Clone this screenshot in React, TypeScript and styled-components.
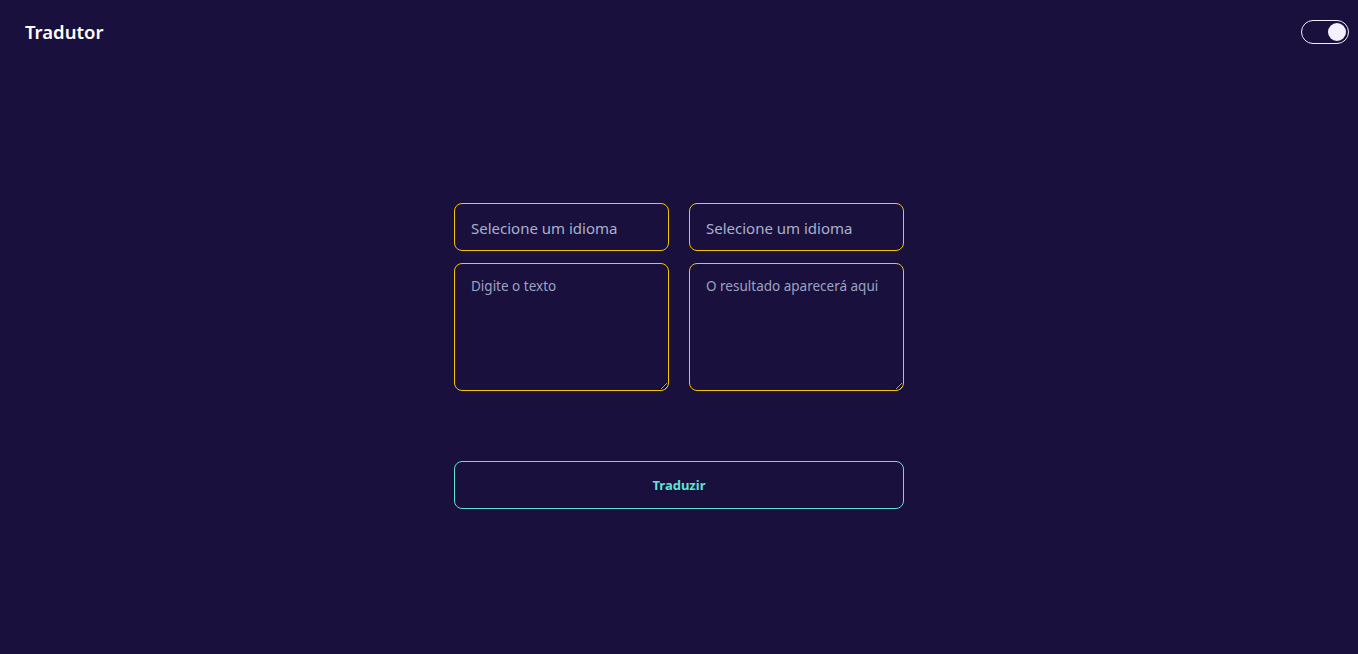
import React, { useState } from 'react';
import styled, { createGlobalStyle } from 'styled-components';

const GlobalStyle = createGlobalStyle`
  html, body {
    margin: 0;
    padding: 0;
    background: #1a103d;
    font-family: "Noto Sans", "Open Sans", sans-serif;
  }
`;

const Page = styled.div`
  min-height: 654px;
  background: #1a103d;
`;

const Header = styled.header`
  height: 66px;
  display: flex;
  align-items: center;
  justify-content: space-between;
  padding: 0 9px 0 25px;
`;

const Title = styled.h1`
  margin: 0 0 2px;
  font-size: 18.5px;
  line-height: 26px;
  font-weight: 600;
  color: #ffffff;
`;

const Toggle = styled.button<{ $on: boolean }>`
  width: 48px;
  height: 24px;
  border: 1px solid #f2eefe;
  border-radius: 12px;
  background: transparent;
  padding: 2px;
  display: flex;
  justify-content: ${p => (p.$on ? 'flex-end' : 'flex-start')};
  align-items: center;
  cursor: pointer;
  margin-top: -2px;
`;

const Knob = styled.span`
  width: 18px;
  height: 18px;
  border-radius: 50%;
  background: #f4f0ff;
`;

const Main = styled.main`
  width: 450px;
  margin: 137px auto 0;
  display: flex;
  flex-direction: column;
`;

const Grid = styled.div`
  display: grid;
  grid-template-columns: 1fr 1fr;
  column-gap: 20px;
  row-gap: 12px;
`;

const Select = styled.select`
  appearance: none;
  -webkit-appearance: none;
  height: 48px;
  border: 1px solid #f5c400;
  border-radius: 8px;
  background: #1a103d;
  color: #a8b0ca;
  font-family: inherit;
  font-size: 15px;
  padding: 1px 16px 0;
  outline: none;
`;

const TextArea = styled.textarea`
  height: 128px;
  box-sizing: border-box;
  border: 1px solid #f5c400;
  border-radius: 8px;
  background: #1a103d;
  color: #c9cfe0;
  font-family: inherit;
  font-size: 13.5px;
  padding: 13px 16px;
  outline: none;

  &::placeholder {
    color: #9aa3c0;
  }
`;

const Button = styled.button`
  margin-top: 70px;
  height: 48px;
  border: 1px solid #5fe3d3;
  border-radius: 8px;
  background: transparent;
  color: #5fe3d3;
  font-family: inherit;
  font-weight: 700;
  font-size: 13px;
  cursor: pointer;
`;

export default function App() {
  const [dark, setDark] = useState(true);
  return (
    <Page>
      <GlobalStyle />
      <Header>
        <Title>Tradutor</Title>
        <Toggle $on={dark} onClick={() => setDark(!dark)} aria-label="Alternar tema">
          <Knob />
        </Toggle>
      </Header>
      <Main>
        <Grid>
          <Select defaultValue="">
            <option value="" disabled>Selecione um idioma</option>
          </Select>
          <Select defaultValue="">
            <option value="" disabled>Selecione um idioma</option>
          </Select>
          <TextArea placeholder="Digite o texto" />
          <TextArea placeholder="O resultado aparecerá aqui" readOnly />
        </Grid>
        <Button>Traduzir</Button>
      </Main>
    </Page>
  );
}
